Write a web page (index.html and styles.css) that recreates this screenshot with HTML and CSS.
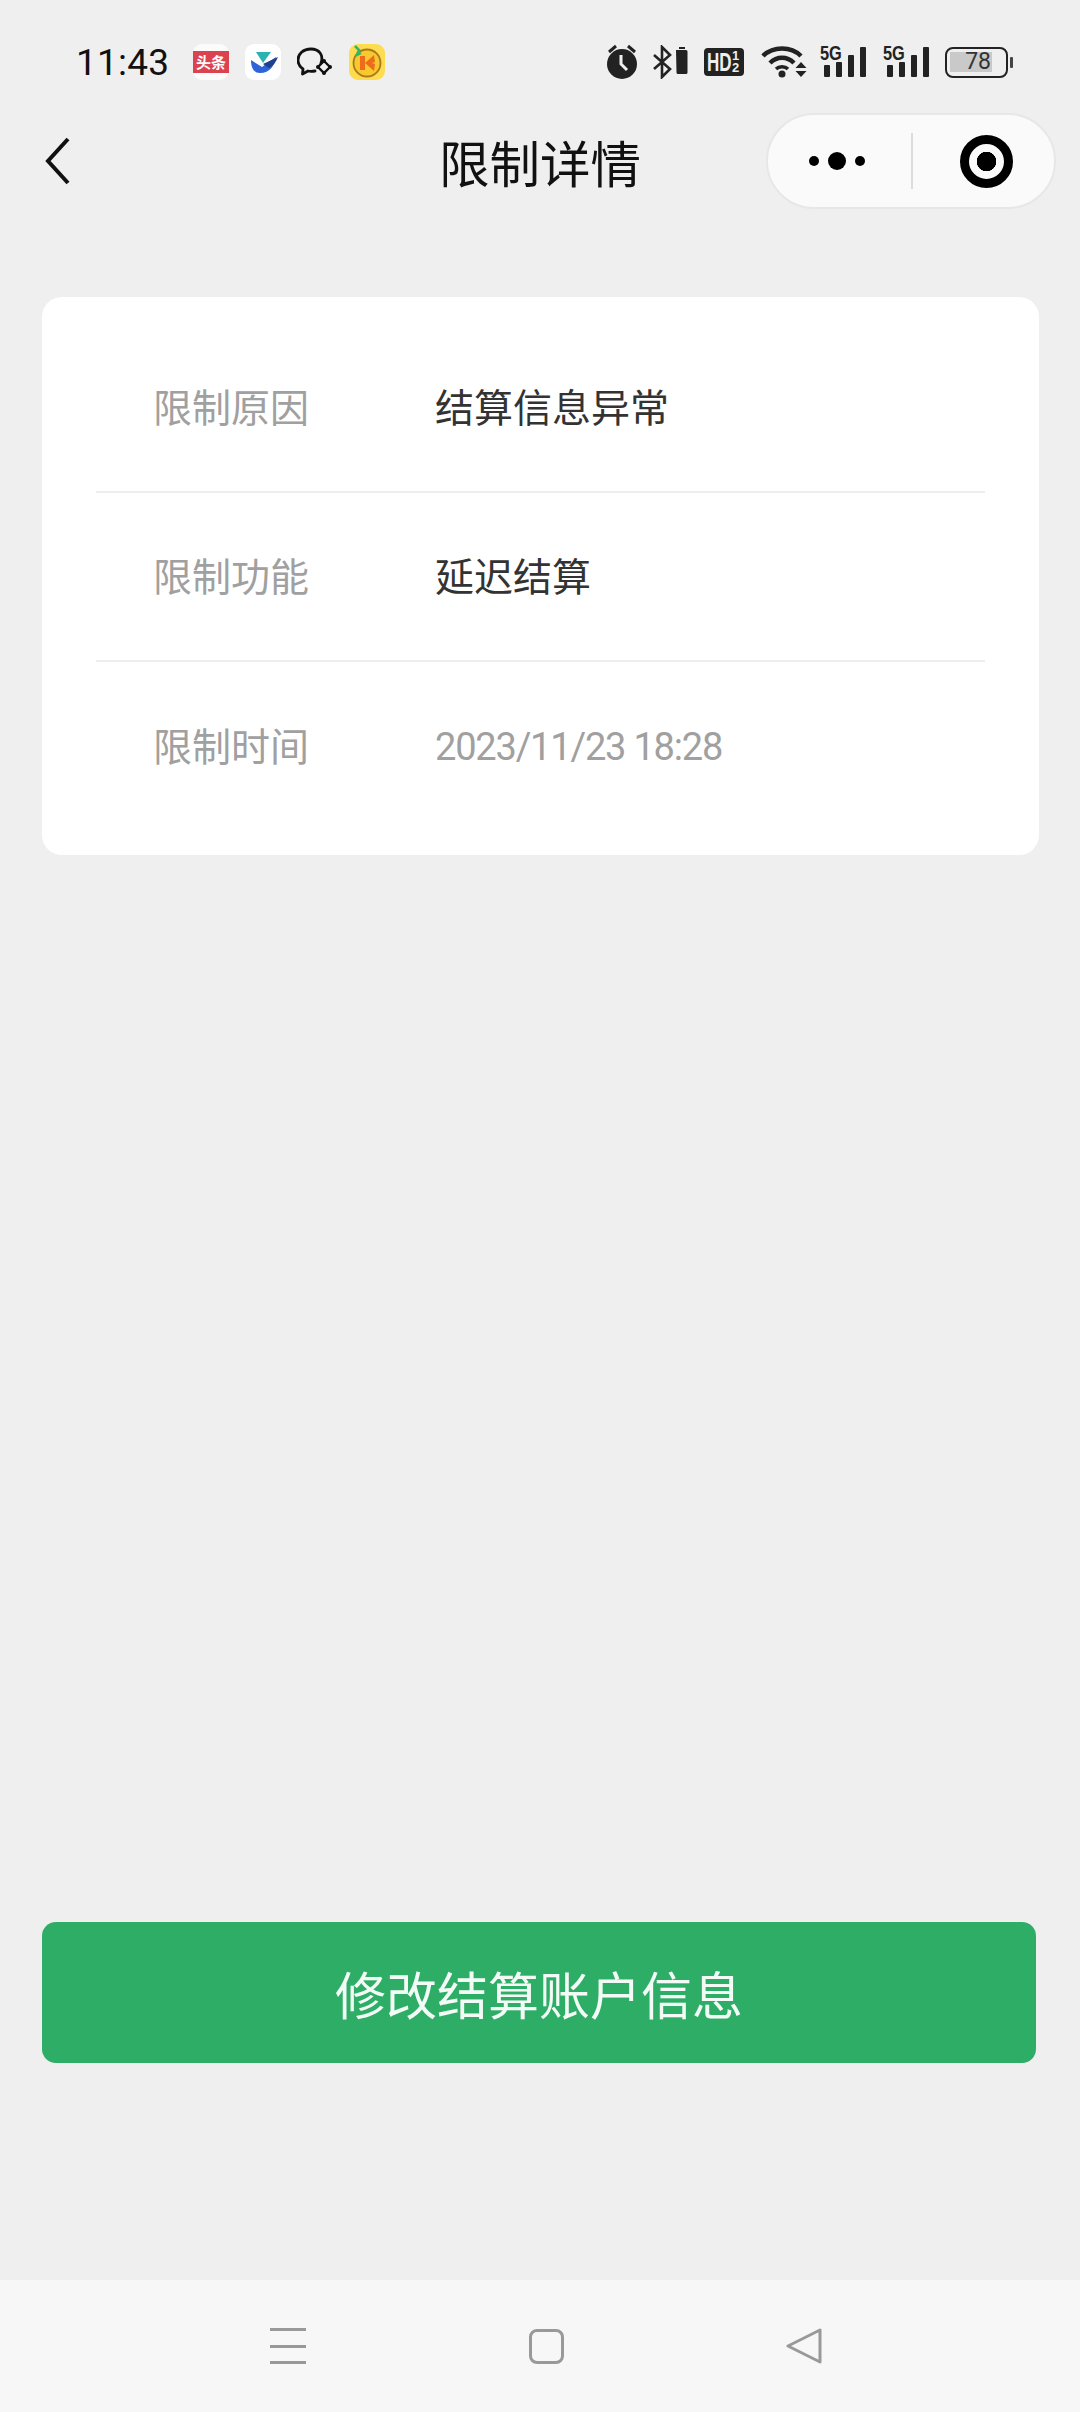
FILE: index.html
```html
<!DOCTYPE html>
<html lang="zh-CN">
<head>
<meta charset="utf-8">
<title>限制详情</title>
<link rel="stylesheet" href="styles.css">
</head>
<body>
<div class="page">
  <header class="status">
    <span class="time">11:43</span>
    <div class="notif">
      <div class="tile tile-toutiao"><span class="tt-label">头条</span></div>
      <div class="tile tile-blue">
        <svg width="36" height="35" viewBox="0 0 36 35"><path d="M6 15 L17 22 L31 12 C30 20 25 28 15 28 C9 28 6 23 6 15Z" fill="#2f63d8"/><path d="M11 7 L26 7 L18 18 Z" fill="#2bb3b0"/><path d="M18 19 L33 12 C31 17 28 21 24 23 Z" fill="#1f3f8f"/></svg>
      </div>
      <svg class="chat" width="36" height="30" viewBox="0 0 36 30"><path d="M24 16 C27 8 22 2 14 2 C6 2 1 7 1 13 C1 17 3 20 6 22 L5.500 27 L11 24 C13 24.500 15 24.500 18 24" fill="none" stroke="#111" stroke-width="2.800" stroke-linecap="round" stroke-linejoin="round"/><path d="M27 14 L33 20 L27 26 L21 20 Z" fill="none" stroke="#111" stroke-width="2.400"/><circle cx="27" cy="14" r="2" fill="#111"/><circle cx="33" cy="20" r="2" fill="#111"/><circle cx="27" cy="26" r="2" fill="#111"/><circle cx="21" cy="20" r="2" fill="#111"/></svg>
      <div class="tile tile-k">
        <svg width="36" height="36" viewBox="0 0 36 36"><circle cx="18" cy="19" r="13.500" fill="#f7c92e" stroke="#a9791c" stroke-width="1.800"/><path d="M11 12 h5 v14 h-5 Z" fill="#f06a1c"/><path d="M16 19 L25 11 L26 18 L23 19 L26 20 L25 27 Z" fill="#f06a1c"/><path d="M6 2 L10 6 L8 11 L12 9" fill="none" stroke="#35b56a" stroke-width="2.500"/></svg>
      </div>
    </div>
    <div class="sys">
      <svg class="alarm" width="32" height="36" viewBox="0 0 32 36"><circle cx="16" cy="20" r="15" fill="#222"/><path d="M3 8 L10 2 M29 8 L22 2" stroke="#222" stroke-width="3"/><path d="M15 11 L15 20 L21 26" fill="none" stroke="#f0f0f0" stroke-width="3"/></svg>
      <svg class="bt" width="36" height="34" viewBox="0 0 36 34"><path d="M1 10 L17 24 L9 32 L9 2 L17 10 L1 24" fill="none" stroke="#222" stroke-width="2.600"/><path d="M23 5 h10 a1.500 1.500 0 0 1 1.500 1.500 v21 a1.500 1.500 0 0 1 -1.500 1.500 h-8 a1.500 1.500 0 0 1 -1.500 -1.500 Z" fill="#222"/><rect x="26" y="2" width="6" height="2" fill="#222"/></svg>
      <div class="hd"><span class="hd-main">HD</span><span class="hd-frac"><b>1</b><b>2</b></span></div>
      <svg class="wifi" width="46" height="34" viewBox="0 0 46 34"><path d="M2 11 C12 1 30 1 40 11" fill="none" stroke="#222" stroke-width="4.500"/><path d="M9 18 C16 11 26 11 33 18" fill="none" stroke="#222" stroke-width="4.500"/><path d="M15 24 C18 21 24 21 27 24" fill="none" stroke="#222" stroke-width="3.500" /><circle cx="21" cy="29" r="3.500" fill="#222"/><path d="M40 17 L45.500 23 L34.500 23 Z M34.500 26 L45.500 26 L40 32 Z" fill="#222"/></svg>
      <div class="signal">
        <span class="five">5G</span>
        <div class="bars"><i class="b1"></i><i class="b2"></i><i class="b3"></i><i class="b4"></i></div>
      </div>
      <div class="signal">
        <span class="five">5G</span>
        <div class="bars"><i class="b1"></i><i class="b2"></i><i class="b3"></i><i class="b4"></i></div>
      </div>
      <div class="battery">
        <div class="batt-body"><span class="batt-fill">78</span></div>
        <i class="batt-nub"></i>
      </div>
    </div>
  </header>

  <nav class="navbar">
    <svg class="back" width="26" height="48" viewBox="0 0 26 48"><path d="M23 2 L3 24 L23 46" fill="none" stroke="#111" stroke-width="4"/></svg>
    <h1 class="title">限制详情</h1>
    <div class="capsule">
      <div class="cap-more"><i class="dot"></i><i class="dot big"></i><i class="dot"></i></div>
      <i class="cap-sep"></i>
      <div class="cap-close"><i class="ring"></i></div>
    </div>
  </nav>

  <main class="content">
    <section class="card">
      <div class="row"><span class="label">限制原因</span><span class="value">结算信息异常</span></div>
      <div class="row"><span class="label">限制功能</span><span class="value">延迟结算</span></div>
      <div class="row"><span class="label">限制时间</span><span class="value date">2023/11/23 18:28</span></div>
    </section>
    <button class="action">修改结算账户信息</button>
  </main>

  <footer class="sysnav">
    <div class="menu"><i></i><i></i><i></i></div>
    <i class="home"></i>
    <svg class="tri" width="36" height="36" viewBox="0 0 36 36"><path d="M34 2 L34 34 L2 18 Z" fill="none" stroke="#999" stroke-width="3" stroke-linejoin="round"/></svg>
  </footer>
</div>
</body>
</html>
```
FILE: styles.css
```css
* { box-sizing: border-box; margin: 0; padding: 0; }
html, body { width: 1080px; height: 2412px; overflow: hidden; }
body { background: #efefef; font-family: "Noto Sans CJK SC", Roboto, sans-serif; }
i { display: block; }
.page { width: 1080px; height: 2412px; display: flex; flex-direction: column; }

.status { height: 124px; flex: none; display: flex; align-items: center; padding: 0 0 0 76px; }
.time { font: 400 37px/1 Roboto, sans-serif; color: #111; width: 117px; letter-spacing: .2px; }
.notif { display: flex; align-items: center; gap: 16px; width: 413px; }
.tile { width: 36px; height: 36px; border-radius: 9px; background: #fff; display: flex; align-items: center; justify-content: center; flex: none; }
.tile-toutiao { background: #fbfbfb; }
.tt-label { width: 36px; height: 22px; background: #dc4350; color: #fff; font-size: 15px; font-weight: 700; line-height: 22px; text-align: center; white-space: nowrap; }
.tile-k { background: #fedc4f; }
.chat { flex: none; }

.sys { display: flex; align-items: center; height: 40px; }
.bt { margin-left: 15px; }
.hd { margin-left: 15px; width: 40px; height: 28px; background: #222; border-radius: 4px; display: flex; align-items: center; padding-left: 3px; color: #efefef; }
.hd-main { font: 700 25px/1 "Liberation Sans", sans-serif; transform: scaleX(.68); transform-origin: left; width: 25px; }
.hd-frac { display: flex; flex-direction: column; }
.hd-frac b { font: 700 13px/12px "Liberation Sans", sans-serif; }
.wifi { margin-left: 17px; }
.signal { position: relative; width: 46px; height: 34px; margin-left: 13px; }
.signal + .signal { margin-left: 17px; }
.five { position: absolute; left: 0; top: -1px; font: 700 21px/18px "Liberation Sans", sans-serif; color: #222; transform: scaleX(.78); transform-origin: left top; }
.bars { position: absolute; left: 4px; right: 0; bottom: 2px; height: 30px; display: flex; align-items: flex-end; gap: 6px; }
.bars i { width: 6px; background: #222; border-radius: 1px; }
.b1 { height: 12px; }
.b2 { height: 15px; }
.b3 { height: 22px; }
.b4 { height: 30px; }
.battery { display: flex; align-items: center; gap: 2px; margin-left: 16px; }
.batt-body { width: 63px; height: 31px; border: 2.500px solid #222; border-radius: 8px; padding: 3px; }
.batt-fill { display: block; width: 42px; height: 20px; background: #c9c9c9; font: 400 23px/20px Roboto, sans-serif; color: #333; text-align: right; padding-right: 1px; }
.batt-nub { width: 3px; height: 11px; background: #444; border-radius: 1px; }

.navbar { height: 88px; flex: none; display: grid; grid-template-columns: 439px 201px 1fr; align-items: center; margin-top: -11px; margin-bottom: 96px; }
.back { margin-left: 45px; }
.title { font-size: 50.500px; font-weight: 400; line-height: 1; color: #111; white-space: nowrap; }
.capsule { width: 290px; height: 96px; margin-left: 126px; background: #fafafa; border: 2px solid #e7e7e7; border-radius: 48px; display: flex; align-items: center; }
.cap-more { width: 143px; display: flex; align-items: center; justify-content: flex-end; gap: 9px; padding-right: 46px; }
.dot { width: 10px; height: 10px; border-radius: 50%; background: #000; }
.dot.big { width: 18px; height: 18px; }
.cap-sep { width: 2px; height: 56px; background: #dcdcdc; }
.cap-close { flex: 1; display: flex; justify-content: center; padding-left: 6px; }
.ring { width: 53px; height: 53px; border: 9px solid #000; border-radius: 50%; background: radial-gradient(circle, #000 0 9.500px, #fafafa 10px); }

.content { flex: 1; padding: 0 0 0 42px; display: flex; flex-direction: column; }
.card { width: 997px; height: 558px; background: #fff; border-radius: 20px; padding: 27px 54px 0; }
.row { height: 169px; display: flex; align-items: center; padding-left: 57px; padding-bottom: 5px; border-bottom: 2px solid #eeeeee; }
.row:last-child { border-bottom: none; }
.label { width: 282px; font-size: 39px; color: #a0a0a0; flex: none; }
.value { font-size: 39px; color: #333; }
.date { margin-top: 5px; font-family: Roboto, sans-serif; font-weight: 400; font-size: 38px; color: #a0a0a0; letter-spacing: -1.200px; }
.action { margin-top: 1067px; width: 994px; height: 141px; border: none; border-radius: 14px; background: #2dad65; color: #f2fbf5; font-family: inherit; font-size: 51px; font-weight: 400; }

.sysnav { height: 132px; flex: none; background: #f7f7f7; display: flex; align-items: center; padding: 0 0 0 270px; }
.menu { width: 36px; height: 36px; display: flex; flex-direction: column; justify-content: space-between; }
.menu i { height: 3px; background: #999; }
.home { width: 35px; height: 35px; margin-left: 223px; border: 3px solid #999; border-radius: 8px; }
.tri { margin-left: 222px; }
```
